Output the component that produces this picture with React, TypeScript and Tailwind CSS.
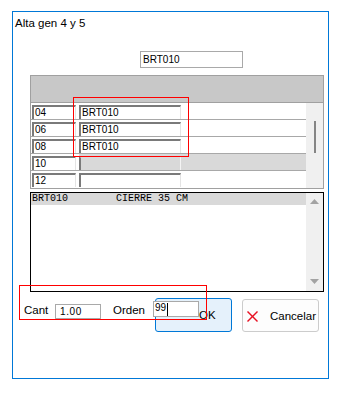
import React from "react";

const sans = { fontFamily: '"Liberation Sans", Arial, sans-serif' };
const mono = { fontFamily: '"Liberation Mono", "Courier New", monospace' };

const rows = [
  { num: "04", code: "BRT010" },
  { num: "06", code: "BRT010" },
  { num: "08", code: "BRT010" },
  { num: "10", code: "", selected: true },
  { num: "12", code: "" },
];

function GridRow({ num, code, selected, last }: { num: string; code: string; selected?: boolean; last?: boolean }) {
  return (
    <div className={`flex h-[17px] ${last ? "" : "border-b border-[#a8a8a8]"}`}>
      <div className="ml-[1px] mt-[2px] h-[14px] w-[44px] border-l-2 border-t-2 border-r border-l-[#7a7a7a] border-t-[#7a7a7a] border-r-[#e4e4e4] bg-white pl-[1px] text-[10px] leading-[11px] text-black">
        {num}
      </div>
      <div className={`ml-[3px] flex flex-1 ${selected ? "bg-[#d9d9d9]" : ""}`}>
        <div
          className={`mt-[2px] h-[14px] w-[102px] border-l-2 border-r pl-[1px] text-[10px] leading-[11px] text-black border-l-[#7a7a7a] ${
            selected ? "border-t-2 border-t-[#d9d9d9] border-r-[#f4f4f4]" : "border-t-2 border-t-[#7a7a7a] border-r-[#e4e4e4]"
          }`}
        >
          {code}
        </div>
      </div>
    </div>
  );
}

export default function App() {
  return (
    <div className="min-h-[394px] bg-white pl-[12px] pt-[11px]" style={sans}>
      <div className="relative h-[368px] w-[317px] border border-[#0078d7]">
        {/* title */}
        <div className="ml-[2px] mt-[3px] text-[11.5px] leading-[16px] text-black">Alta gen 4 y 5</div>

        {/* top code box */}
        <div className="ml-[127px] mt-[20px] h-[17px] w-[103px] border border-[#a9a9a9] bg-white pl-[2px] text-[10px] leading-[15px] text-black">
          BRT010
        </div>

        {/* grid */}
        <div className="ml-[17px] mt-[7px] flex h-[114px] w-[294px] flex-col border border-[#a0a0a0]">
          <div className="h-[27px] border-b border-[#a0a0a0] bg-[#c8c8c8]" />
          <div className="flex flex-1">
            <div className="flex flex-1 flex-col bg-white">
              {rows.map((r, i) => (
                <GridRow key={r.num} {...r} last={i === rows.length - 1} />
              ))}
            </div>
            <div className="flex w-[17px] justify-center bg-[#f0f0f0]">
              <div className="ml-[1px] mt-[18px] h-[32px] w-[2px] bg-[#858585]" />
            </div>
          </div>
        </div>

        {/* list */}
        <div className="ml-[17px] mt-[3px] flex h-[100px] w-[294px] border border-black bg-white">
          <div className="flex-1">
            <div className="h-[12px] whitespace-pre bg-[#d9d9d9] pl-[1px] text-[10px] leading-[12px] text-black" style={mono}>
              {"BRT010        CIERRE 35 CM"}
            </div>
          </div>
          <div className="flex w-[17px] flex-col items-center justify-between bg-[#f0f0f0] pb-[7px] pt-[6px]">
            <svg width="9" height="5" viewBox="0 0 9 5">
              <polygon points="0,5 9,5 4.5,0" fill="#a3a3a3" />
            </svg>
            <svg width="9" height="5" viewBox="0 0 9 5">
              <polygon points="0,0 9,0 4.5,5" fill="#a3a3a3" />
            </svg>
          </div>
        </div>

        {/* bottom row */}
        <div className="mt-[6px] flex items-start pl-[11px] text-[11.5px] leading-[16px] text-black">
          <span className="mt-[4px] w-[31px]">Cant</span>
          <div className="mt-[6px] h-[15px] w-[46px] border border-[#a9a9a9] bg-white pl-[4px] text-[10px] leading-[13px] tracking-[0.6px]">
            1.00
          </div>
          <span className="ml-[12px] mt-[4px] w-[40px]">Orden</span>
          <div className="relative z-10 mt-[3px] flex h-[16px] w-[46px] items-start border border-[#a9a9a9] bg-white pl-[1px] text-[10px] leading-[12px]">
            <span>99</span>
            <span className="ml-[1px] mt-[1px] h-[13px] w-[1px] bg-black" />
          </div>
          <button className="ml-[-44px] flex h-[34px] w-[77px] items-center rounded-[3px] border border-[#0078d7] bg-[#e5f1fb] pl-[43px] text-[11.5px] text-black">
            OK
          </button>
          <button className="ml-[10px] mt-[1px] flex h-[33px] w-[77px] items-center rounded-[3px] border border-[#cccccc] bg-[#fdfdfd] pl-[4px] text-[11.5px] text-black">
            <svg width="11" height="11" viewBox="0 0 11 11" className="mb-[-1px]">
              <line x1="0.5" y1="0.5" x2="10.5" y2="10.5" stroke="#e81123" strokeWidth="1.4" />
              <line x1="10.5" y1="0.5" x2="0.5" y2="10.5" stroke="#e81123" strokeWidth="1.4" />
            </svg>
            <span className="ml-[12px]">Cancelar</span>
          </button>
        </div>

        {/* red highlight boxes */}
        <div className="absolute left-[60px] top-[85px] h-[60px] w-[116px] border border-[#ff0000]" />
        <div className="absolute left-[6px] top-[273px] h-[35px] w-[188px] border border-[#ff0000]" />
      </div>
    </div>
  );
}
